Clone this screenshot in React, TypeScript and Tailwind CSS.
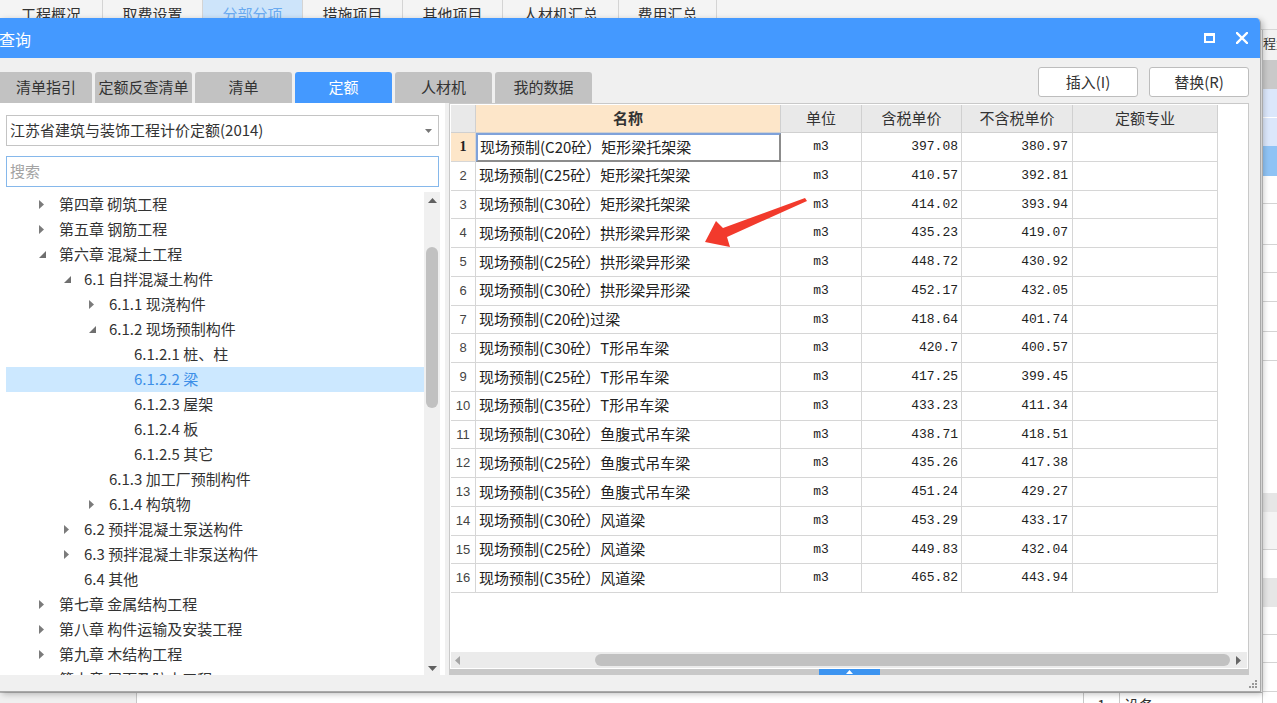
import React from 'react';

const cjk = "font-['Noto_Sans_CJK_SC','Noto_Sans',sans-serif]";

function TriRight({ c = '#7b7b7b' }: { c?: string }) {
  return (
    <svg width="5" height="9" viewBox="0 0 5 9">
      <path d="M0 0L5 4.5L0 9Z" fill={c} />
    </svg>
  );
}
function TriExp() {
  return (
    <svg width="7" height="7" viewBox="0 0 7 7">
      <path d="M7 0L7 7L0 7Z" fill="#6f6f6f" />
    </svg>
  );
}

type Node = { l: number; t: string; a?: 'c' | 'e'; sel?: boolean };
const tree: Node[] = [
  { l: 0, t: '第四章 砌筑工程', a: 'c' },
  { l: 0, t: '第五章 钢筋工程', a: 'c' },
  { l: 0, t: '第六章 混凝土工程', a: 'e' },
  { l: 1, t: '6.1 自拌混凝土构件', a: 'e' },
  { l: 2, t: '6.1.1 现浇构件', a: 'c' },
  { l: 2, t: '6.1.2 现场预制构件', a: 'e' },
  { l: 3, t: '6.1.2.1 桩、柱' },
  { l: 3, t: '6.1.2.2 梁', sel: true },
  { l: 3, t: '6.1.2.3 屋架' },
  { l: 3, t: '6.1.2.4 板' },
  { l: 3, t: '6.1.2.5 其它' },
  { l: 2, t: '6.1.3 加工厂预制构件' },
  { l: 2, t: '6.1.4 构筑物', a: 'c' },
  { l: 1, t: '6.2 预拌混凝土泵送构件', a: 'c' },
  { l: 1, t: '6.3 预拌混凝土非泵送构件', a: 'c' },
  { l: 1, t: '6.4 其他' },
  { l: 0, t: '第七章 金属结构工程', a: 'c' },
  { l: 0, t: '第八章 构件运输及安装工程', a: 'c' },
  { l: 0, t: '第九章 木结构工程', a: 'c' },
  { l: 0, t: '第十章 屋面及防水工程', a: 'c' },
];
const pads = ['pl-[30px]', 'pl-[55px]', 'pl-[80px]', 'pl-[105px]'];

const rows: [string, string, string][] = [
  ['现场预制(C20砼）矩形梁托架梁', '397.08', '380.97'],
  ['现场预制(C25砼）矩形梁托架梁', '410.57', '392.81'],
  ['现场预制(C30砼）矩形梁托架梁', '414.02', '393.94'],
  ['现场预制(C20砼）拱形梁异形梁', '435.23', '419.07'],
  ['现场预制(C25砼）拱形梁异形梁', '448.72', '430.92'],
  ['现场预制(C30砼）拱形梁异形梁', '452.17', '432.05'],
  ['现场预制(C20砼)过梁', '418.64', '401.74'],
  ['现场预制(C30砼）T形吊车梁', '420.7', '400.57'],
  ['现场预制(C25砼）T形吊车梁', '417.25', '399.45'],
  ['现场预制(C35砼）T形吊车梁', '433.23', '411.34'],
  ['现场预制(C30砼）鱼腹式吊车梁', '438.71', '418.51'],
  ['现场预制(C25砼）鱼腹式吊车梁', '435.26', '417.38'],
  ['现场预制(C35砼）鱼腹式吊车梁', '451.24', '429.27'],
  ['现场预制(C30砼）风道梁', '453.29', '433.17'],
  ['现场预制(C25砼）风道梁', '449.83', '432.04'],
  ['现场预制(C35砼）风道梁', '465.82', '443.94'],
];

const appTabs: [string, string][] = [
  ['工程概况', 'w-[103px]'],
  ['取费设置', 'w-[100px]'],
  ['分部分项', 'w-[100px]'],
  ['措施项目', 'w-[100px]'],
  ['其他项目', 'w-[100px]'],
  ['人材机汇总', 'w-[116px]'],
  ['费用汇总', 'w-[98px]'],
];

const dlgTabs = ['清单指引', '定额反查清单', '清单', '定额', '人材机', '我的数据'];

const rightRows: [string, string][] = [
  ['h-[30px]', 'bg-[#f2f2f2]'],
  ['h-[29px]', 'bg-[#c9c9c9]'],
  ['h-[29px]', 'bg-[#dbe7fb] border-b border-white'],
  ['h-[28px]', 'bg-[#dbe7fb]'],
  ['h-[30px]', 'bg-[#8fc3f5]'],
  ['h-[28px]', 'bg-white border-b border-[#d4d4d4]'],
  ['h-[41px]', 'bg-white border-b border-[#d4d4d4]'],
  ['h-[28px]', 'bg-white border-b border-[#d4d4d4]'],
  ['h-[29px]', 'bg-white border-b border-[#d4d4d4]'],
  ['h-[30px]', 'bg-white border-b border-[#d4d4d4]'],
  ['h-[29px]', 'bg-white border-b border-[#d4d4d4]'],
  ['h-[132px]', 'bg-white'],
  ['h-[19px]', 'bg-[#e6e6e6]'],
  ['h-[38px]', 'bg-[#f4f4f4] border-b border-[#d4d4d4]'],
  ['h-[28px]', 'bg-white'],
  ['h-[29px]', 'bg-[#e6e6e6]'],
  ['h-[28px]', 'bg-white border-b border-[#d4d4d4]'],
  ['h-[28px]', 'bg-white border-b border-[#d4d4d4]'],
  ['h-[29px]', 'bg-white border-b border-[#d4d4d4]'],
];

function HeaderCell({ w, children, bold, peach }: { w: string; children?: React.ReactNode; bold?: boolean; peach?: boolean }) {
  return (
    <div
      className={`${w} h-full shrink-0 flex items-center justify-center border-r border-b border-[#d0d0d0] text-[15px] text-[#333] ${
        peach ? 'bg-[#fde6c9]' : 'bg-[#e9e9e9]'
      } ${bold ? 'font-bold' : ''}`}
    >
      {children}
    </div>
  );
}

export default function App() {
  return (
    <div className={`relative w-[1277px] h-[703px] overflow-hidden bg-white ${cjk}`}>
      {/* Background application */}
      <div className="flex flex-col w-full h-full">
        <div className="h-[30px] shrink-0 flex bg-[#f4f4f4] border-b border-[#d6d6d6]">
          {appTabs.map(([t, w]) => (
            <div
              key={t}
              className={`${w} shrink-0 h-full flex items-center justify-center border-r border-[#d4d4d4] text-[15px] ${
                t === '分部分项' ? 'bg-[#cde4fa] text-[#6aaaf0]' : 'text-[#333]'
              }`}
            >
              {t}
            </div>
          ))}
        </div>
        <div className="flex-1 flex min-h-0">
          <div className="w-[1262px] shrink-0 flex flex-col">
            <div className="flex-1" />
            <div className="h-[11px] shrink-0 flex border-t border-[#b8b8b8] overflow-hidden">
              <div className="w-[137px] shrink-0 bg-[#f0f0f0] border-r border-[#c8c8c8]" />
              <div className="w-[946px] shrink-0" />
              <div className="w-[37px] shrink-0 border-x border-[#c8c8c8] flex justify-center pt-[2px] text-[15px] leading-[20px] text-[#333]">1</div>
              <div className="flex-1 pl-[4px] pt-[2px] text-[15px] leading-[20px] text-[#333] whitespace-nowrap">设备</div>
            </div>
          </div>
          <div className="flex-1 flex flex-col overflow-hidden border-l border-[#c8c8c8]">
            {rightRows.map(([h, c], i) => (
              <div key={i} className={`${h} ${c} shrink-0 text-[13px] text-[#333] whitespace-nowrap leading-[26px]`}>
                {i === 0 ? '程量' : ''}
              </div>
            ))}
          </div>
        </div>
      </div>

      {/* Dialog window */}
      <div className="absolute left-0 top-[18px] w-[1261px] h-[674px] flex flex-col bg-[#f0f0f0] border-r border-b border-[#a9a9a9] rounded-tr-[5px] overflow-hidden shadow-[2px_2px_6px_rgba(0,0,0,0.25)]">
        {/* Title bar */}
        <div className="h-[40px] shrink-0 bg-[#4499ff] flex items-center justify-between">
          <span className="text-[16px] text-white -ml-[1px] pt-[2px]">查询</span>
          <div className="flex items-center gap-[21px] pr-[12px]">
            <div className="w-[11px] h-[10px] border-2 border-t-[3px] border-white" />
            <svg width="12" height="12" viewBox="0 0 12 12">
              <path d="M1 1L11 11M11 1L1 11" stroke="white" strokeWidth="2.4" strokeLinecap="square" />
            </svg>
          </div>
        </div>

        {/* Toolbar */}
        <div className="h-[45px] shrink-0 flex justify-between items-start">
          <div className="mt-[14px] h-[31px] flex gap-[3px]">
            {dlgTabs.map((t, i) => (
              <div
                key={t}
                className={`${i === 0 ? 'w-[92px] rounded-tr-[3px]' : 'w-[97px] rounded-t-[3px]'} h-full flex items-center justify-center text-[15px] ${
                  t === '定额' ? 'bg-[#4499ff] text-white' : 'bg-[#c2c2c2] text-[#333]'
                }`}
              >
                {t}
              </div>
            ))}
          </div>
          <div className="mt-[9px] mr-[11px] flex gap-[11px]">
            <div className="w-[100px] h-[30px] bg-white border border-[#bdbdbd] rounded-[3px] flex items-center justify-center text-[15px] text-[#333]">
              插入(I)
            </div>
            <div className="w-[100px] h-[30px] bg-white border border-[#bdbdbd] rounded-[3px] flex items-center justify-center text-[15px] text-[#333]">
              替换(R)
            </div>
          </div>
        </div>

        {/* Content */}
        <div className="h-[572px] shrink-0 flex">
          {/* Left panel */}
          <div className="w-[445px] shrink-0 bg-white flex flex-col pt-[12px]">
            <div className="mx-[6px] h-[31px] shrink-0 border border-[#c4c4c4] bg-white flex items-center justify-between pl-[3px] pr-[6px]">
              <span className="text-[15px] text-[#333]">江苏省建筑与装饰工程计价定额(2014)</span>
              <svg width="7" height="4" viewBox="0 0 7 4">
                <path d="M0 0L7 0L3.5 4Z" fill="#777" />
              </svg>
            </div>
            <div className="mx-[6px] mt-[10px] h-[31px] shrink-0 border border-[#86b8eb] bg-white flex items-center pl-[3px]">
              <span className="text-[15px] text-[#a3a3a3]">搜索</span>
            </div>
            <div className="mt-[5px] flex-1 min-h-0 flex pl-[6px] pr-[5px]">
              <div className="flex-1 overflow-hidden">
                {tree.map((n, i) => (
                  <div key={i} className={`h-[25px] flex items-center ${n.sel ? 'bg-[#cce8ff]' : ''}`}>
                    <div className={`${pads[n.l]} flex items-center`}>
                      <div className="w-[23px] flex items-center pl-[3px]">
                        {n.a === 'c' ? <TriRight /> : n.a === 'e' ? <TriExp /> : null}
                      </div>
                      <span className={`text-[15px] whitespace-nowrap ${n.sel ? 'text-[#3d8fe8]' : 'text-[#333]'}`}>{n.t}</span>
                    </div>
                  </div>
                ))}
              </div>
              <div className="w-[16px] shrink-0 bg-[#f0f0f0] flex flex-col items-center">
                <div className="h-[16px] shrink-0 flex items-center justify-center">
                  <svg width="9" height="5" viewBox="0 0 9 5">
                    <path d="M0 5L4.5 0L9 5Z" fill="#606060" />
                  </svg>
                </div>
                <div className="h-[39px] shrink-0" />
                <div className="w-[12px] h-[161px] shrink-0 rounded-full bg-[#c1c1c1]" />
                <div className="flex-1" />
                <div className="h-[14px] shrink-0 flex items-center justify-center">
                  <svg width="9" height="5" viewBox="0 0 9 5">
                    <path d="M0 0L9 0L4.5 5Z" fill="#606060" />
                  </svg>
                </div>
              </div>
            </div>
          </div>

          {/* Right panel */}
          <div className="ml-[4px] w-[800px] shrink-0 bg-white border-x border-t border-[#c9c9c9] flex flex-col">
            <div className="flex-1 min-h-0 pl-[1px] pt-[1px]">
              <div className="h-[28px] flex">
                <HeaderCell w="w-[25px]" />
                <HeaderCell w="w-[305px]" bold peach>名称</HeaderCell>
                <HeaderCell w="w-[81px]">单位</HeaderCell>
                <HeaderCell w="w-[100px]">含税单价</HeaderCell>
                <HeaderCell w="w-[111px]">不含税单价</HeaderCell>
                <HeaderCell w="w-[145px]">定额专业</HeaderCell>
              </div>
              {rows.map(([name, a, b], i) => (
                <div key={i} className="h-[28.75px] flex">
                  <div
                    className={`w-[25px] shrink-0 h-full flex items-center justify-center border-r border-b border-[#d6d6d6] ${
                      i === 0
                        ? "bg-[#fde6c9] font-['Liberation_Serif',serif] font-bold text-[14px] text-[#222]"
                        : "font-['Liberation_Sans',sans-serif] text-[13px] text-[#444]"
                    }`}
                  >
                    {i + 1}
                  </div>
                  <div
                    className={`w-[305px] shrink-0 h-full flex items-center text-[15px] text-[#222] whitespace-nowrap ${
                      i === 0
                        ? 'border-2 border-[#7fa2da] border-r-[#8c8c8c] border-b-[#8c8c8c] pl-[2px]'
                        : 'border-r border-b border-[#d6d6d6] pl-[3px]'
                    }`}
                  >
                    {name}
                  </div>
                  <div className="w-[81px] shrink-0 h-full flex items-center justify-center border-r border-b border-[#d6d6d6] font-['Liberation_Mono',monospace] text-[13px] text-[#222]">
                    m3
                  </div>
                  <div className="w-[100px] shrink-0 h-full flex items-center justify-end pr-[3px] border-r border-b border-[#d6d6d6] font-['Liberation_Mono',monospace] text-[13px] text-[#222]">
                    {a}
                  </div>
                  <div className="w-[111px] shrink-0 h-full flex items-center justify-end pr-[4px] border-r border-b border-[#d6d6d6] font-['Liberation_Mono',monospace] text-[13px] text-[#222]">
                    {b}
                  </div>
                  <div className="w-[145px] shrink-0 h-full border-r border-b border-[#d6d6d6]" />
                </div>
              ))}
            </div>
            {/* horizontal scrollbar */}
            <div className="h-[16px] shrink-0 mx-[1px] bg-[#ebebeb] flex items-center">
              <div className="w-[12px] flex justify-center">
                <svg width="5" height="9" viewBox="0 0 5 9">
                  <path d="M5 0L0 4.5L5 9Z" fill="#a5a5a5" />
                </svg>
              </div>
              <div className="w-[132px]" />
              <div className="w-[635px] h-[12px] rounded-full bg-[#c1c1c1]" />
              <div className="flex-1 flex justify-center">
                <TriRight c="#666" />
              </div>
            </div>
            <div className="h-[1px] shrink-0" />
            <div className="h-[6px] shrink-0 bg-[#c8c8c8] flex justify-center">
              <div className="w-[61px] h-full bg-[#3c94f0] flex items-center justify-center">
                <svg width="7" height="4" viewBox="0 0 7 4">
                  <path d="M0 4L3.5 0L7 4Z" fill="white" />
                </svg>
              </div>
            </div>
          </div>
        </div>

        {/* bottom strip with grip */}
        <div className="flex-1 flex justify-end items-end pr-[3px] pb-[3px]">
          <svg width="9" height="9" viewBox="0 0 9 9">
            <rect x="7" y="1" width="2" height="2" fill="#999" />
            <rect x="4" y="4" width="2" height="2" fill="#999" />
            <rect x="7" y="4" width="2" height="2" fill="#999" />
            <rect x="1" y="7" width="2" height="2" fill="#999" />
            <rect x="4" y="7" width="2" height="2" fill="#999" />
            <rect x="7" y="7" width="2" height="2" fill="#999" />
          </svg>
        </div>
      </div>

      {/* red annotation arrow */}
      <svg className="absolute left-0 top-0 pointer-events-none" width="1277" height="703" viewBox="0 0 1277 703">
        <polygon
          points="705,242 716,221 723,228 805,198 807,201 727,237 730,247"
          fill="#f23a2c"
        />
      </svg>
    </div>
  );
}
